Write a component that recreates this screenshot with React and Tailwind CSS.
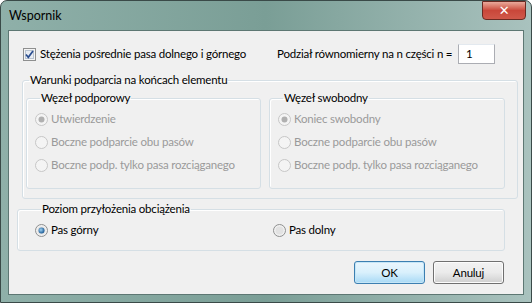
import React, { useState } from 'react';

const font = { fontFamily: 'Lato, "Open Sans", sans-serif' };

function Radio({ checked, disabled }) {
  if (disabled) {
    return (
      <svg width="13" height="13" viewBox="0 0 13 13" className="shrink-0">
        <circle cx="6.5" cy="6.5" r="6" fill="#f4f4f4" stroke="#c6c6c6" />
        {checked && <circle cx="6.5" cy="6.5" r="3" fill="#b0b0b0" />}
      </svg>
    );
  }
  return (
    <svg width="13" height="13" viewBox="0 0 13 13" className="shrink-0">
      <defs>
        <radialGradient id="rg1" cx="0.4" cy="0.4" r="0.6">
          <stop offset="0" stopColor="#9fd2f2" />
          <stop offset="1" stopColor="#1c5b96" />
        </radialGradient>
      </defs>
      <circle cx="6.5" cy="6.5" r="6" fill="#f0f0f0" stroke="#8e8f8f" />
      <circle cx="6.5" cy="6.5" r="4" fill="#e2e2e2" />
      {checked && <circle cx="6.5" cy="6.5" r="3" fill="url(#rg1)" />}
    </svg>
  );
}

function Option({ label, checked, disabled }) {
  return (
    <div className={`flex items-center gap-[3px] h-[16px] whitespace-nowrap ${disabled ? 'text-[#9a9a9a]' : 'text-black'}`}>
      <Radio checked={checked} disabled={disabled} />
      <span>{label}</span>
    </div>
  );
}

function Group({ title, className, legendClass = 'ml-[4px]', children }) {
  return (
    <fieldset className={`border border-[#d5dfe5] rounded-[3px] shadow-[inset_1px_1px_0_#ffffff] ${className}`}>
      <legend className={`px-[1px] leading-[14px] whitespace-nowrap ${legendClass}`}>{title}</legend>
      {children}
    </fieldset>
  );
}

export default function App() {
  const [n] = useState('1');
  return (
    <div className="w-[532px] h-[303px] text-[11.5px] tracking-[-0.2px] text-black" style={font}>
      <div className="w-full h-full rounded-t-[7px] border border-[#3a4a48] bg-gradient-to-r from-[#8fb0a9] via-[#7a9e96] to-[#a9c2be] flex flex-col px-[7px] pb-[7px]">
        <div className="h-[29px] flex items-start justify-between">
          <span className="mt-[6px] ml-[1px] text-[12.5px] tracking-normal text-black">Wspornik</span>
          <div className="w-[44px] h-[19px] -mr-[2px] rounded-b-[4px] border border-[#6b2a22] bg-gradient-to-b from-[#e9a99b] via-[#c9473a] to-[#d0584a] flex items-center justify-center">
            <span className="text-white font-bold text-[13px] leading-none" style={{ fontFamily: '"DejaVu Sans", sans-serif' }}>✕</span>
          </div>
        </div>
        <div className="flex-1 border border-[#5d7773] bg-[#f0f0f0] flex flex-col pt-[13px]">
          <div className="flex items-center h-[20px] whitespace-nowrap">
            <div className="flex items-center gap-[4px] ml-[14px] w-[254px]">
              <svg width="13" height="13" viewBox="0 0 13 13" className="shrink-0">
                <rect x="0.5" y="0.5" width="12" height="12" fill="#f4f4f4" stroke="#8e8f8f" />
                <rect x="2.5" y="2.5" width="8" height="8" fill="#e8ecf2" stroke="#b8c3d0" />
                <path d="M3 6.5 L5.3 9.3 L10 3" fill="none" stroke="#2a4d8f" strokeWidth="1.7" />
              </svg>
              <span>Stężenia pośrednie pasa dolnego i górnego</span>
            </div>
            <span className="w-[181px]">Podział równomierny na n części n =</span>
            <div className="w-[37px] h-[20px] bg-white border border-[#abadb3] border-t-[#e3e9ef] pl-[7px] leading-[18px]">{n}</div>
          </div>

          <Group title="Warunki podparcia na końcach elementu" legendClass="ml-[3px]" className="mt-[9px] ml-[13px] w-[496px] h-[126px] pl-[3px]">
            <div className="flex gap-[8px] mt-[4px]">
              <Group title="Węzeł podporowy" legendClass="ml-[5px]" className="w-[235px] h-[98px] pl-[8px]">
                <div className="flex flex-col gap-[7px] pt-[6px]">
                  <Option label="Utwierdzenie" checked disabled />
                  <Option label="Boczne podparcie obu pasów" disabled />
                  <Option label="Boczne podp. tylko pasa rozciąganego" disabled />
                </div>
              </Group>
              <Group title="Węzeł swobodny" legendClass="ml-[5px]" className="w-[236px] h-[98px] pl-[8px]">
                <div className="flex flex-col gap-[7px] pt-[6px]">
                  <Option label="Koniec swobodny" checked disabled />
                  <Option label="Boczne podparcie obu pasów" disabled />
                  <Option label="Boczne podp. tylko pasa rozciąganego" disabled />
                </div>
              </Group>
            </div>
          </Group>

          <Group title="Poziom przyłożenia obciążenia" legendClass="ml-[6px]" className="mt-[3px] ml-[8px] w-[488px] h-[49px] pl-[17px]">
            <div className="flex items-center pt-[6px]">
              <div className="w-[238px]"><Option label="Pas górny" checked /></div>
              <Option label="Pas dolny" />
            </div>
          </Group>

          <div className="flex gap-[8px] mt-[10px] ml-[345px]">
            <button className="w-[71px] h-[23px] rounded-[3px] border border-[#3c7fb1] bg-gradient-to-b from-[#eaf6fd] via-[#d9f0fc] to-[#a7d9f5] shadow-[inset_0_0_0_1px_#c5e6f7]">OK</button>
            <button className="w-[71px] h-[23px] rounded-[3px] border border-[#707070] bg-gradient-to-b from-[#f2f2f2] via-[#ebebeb] to-[#cfcfcf] shadow-[inset_0_0_0_1px_#fcfcfc]">Anuluj</button>
          </div>
        </div>
      </div>
    </div>
  );
}
